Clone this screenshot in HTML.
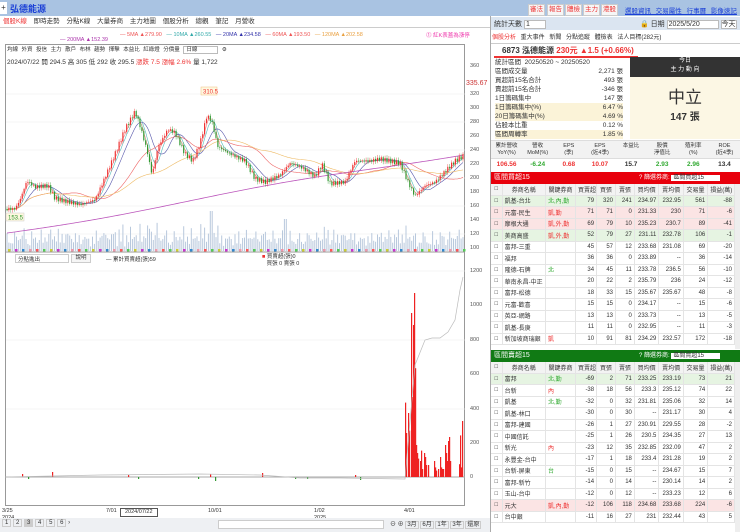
<!DOCTYPE html>
<html><head><meta charset="utf-8">
<style>
*{box-sizing:border-box;margin:0;padding:0}
body{width:740px;height:532px;overflow:hidden;background:#fff;font-family:"Liberation Sans","Noto Sans CJK TC",sans-serif;font-size:7px;color:#333;position:relative}
.a{position:absolute}
.btn{position:absolute;border:1px solid #ccc;background:#f6f6f6;font-size:6.5px;line-height:10px;text-align:center}
table{border-collapse:collapse;width:100%;font-size:6px;table-layout:fixed}
td{border-right:1px solid #e4e4e4;border-bottom:1px solid #e4e4e4;height:11.5px;text-align:right;padding:0 2px;white-space:nowrap;overflow:hidden}
td:first-child{text-align:center}
td.n{text-align:left}
tr.h td{background:#f3f3f3;text-align:center;height:11px}
.r{color:#e33}.g{color:#3a3}
</style></head><body>
<div class="a" style="left:0;top:0;width:740px;height:16px;background:#a9c3e2"></div>
<div class="a" style="left:0;top:2px;width:7px;height:12px;background:#fff;font-size:8px;line-height:12px;text-align:center">+</div>
<div class="a" style="left:10px;top:2px;font-size:9px;color:#1a3fd6;font-weight:bold">弘德能源</div>
<div class="btn" style="left:528px;top:4px;width:17px;color:#e33">審法</div>
<div class="btn" style="left:547px;top:4px;width:17px;color:#e33">報告</div>
<div class="btn" style="left:565px;top:4px;width:17px;color:#e33">體檢</div>
<div class="btn" style="left:583px;top:4px;width:17px;color:#e33">主力</div>
<div class="btn" style="left:601px;top:4px;width:17px;color:#e33">港股</div>
<div class="a" style="left:625px;top:5px;color:#1a3fd6;text-decoration:underline;font-size:6.5px;word-spacing:3px">選股資訊 交易屬性 行事曆 影像速記</div>
<div class="a" style="left:0;top:16px;width:490px;height:12px;border-bottom:1px solid #ccc"></div>
<div class="a" style="left:3px;top:17px;font-size:6.5px;line-height:10px;word-spacing:5px"><span class="r">個股K線</span> 即時走勢 分點K線 大量券商 主力地圖 個股分析 總觀 筆記 月營收</div>
<div class="a" style="left:120px;top:32px;font-size:5.5px;white-space:nowrap"><span style="color:#e55">— 5MA ▲279.90</span> &nbsp; <span style="color:#3aa">— 10MA ▲260.55</span> &nbsp; <span style="color:#33a">— 20MA ▲234.58</span> &nbsp; <span style="color:#e55">— 60MA ▲193.50</span> &nbsp; <span style="color:#e9a040">— 120MA ▲202.58</span></div>
<div class="a" style="left:60px;top:37px;font-size:5.5px;color:#a3a">— 200MA ▲152.39</div>
<div class="a" style="left:426px;top:31px;font-size:5.5px;color:#e3a">⓵ 紅K表蓋為漲停</div>
<div class="a" style="left:5px;top:44px;width:460px;height:462px;border:1px solid #999"></div>
<div class="a" style="left:7px;top:46px;font-size:5.5px;line-height:8px;word-spacing:2px;white-space:nowrap">均線 外資 投信 主力 散戶 布林 趨勢 揮擊 本益比 紅綠燈 分價量 <span style="border:1px solid #bbb;padding:0 20px 0 2px">日線</span> ⚙</div>
<div class="a" style="left:7px;top:56px;font-size:6.5px;white-space:nowrap">2024/07/22 開 294.5 高 305 低 292 收 295.5 <span class="r">漲跌 7.5 漲幅 2.6%</span> 量 1,722</div>
<div class="a" style="left:470px;top:0;font-size:5.5px;line-height:7px;color:#555">
<div class="a" style="top:63px">360</div><div class="a" style="top:91px">320</div><div class="a" style="top:105px">300</div><div class="a" style="top:119px">280</div><div class="a" style="top:133px">260</div><div class="a" style="top:147px">240</div><div class="a" style="top:161px">220</div><div class="a" style="top:175px">200</div><div class="a" style="top:189px">180</div><div class="a" style="top:203px">160</div><div class="a" style="top:217px">140</div><div class="a" style="top:231px">120</div><div class="a" style="top:245px">100</div>
<div class="a" style="top:268px">1200</div><div class="a" style="top:302px">1000</div><div class="a" style="top:337px">800</div><div class="a" style="top:371px">600</div><div class="a" style="top:406px">400</div><div class="a" style="top:440px">200</div><div class="a" style="top:474px">0</div>
</div>
<div class="a" style="left:466px;top:80px;font-size:7px;color:#c33">335.67</div>
<svg class="a" style="left:0;top:0" width="466" height="510" id="sv">
<g stroke="#eee" stroke-width="0.6"><line x1="6" x2="465" y1="94" y2="94"/><line x1="6" x2="465" y1="122" y2="122"/><line x1="6" x2="465" y1="150" y2="150"/><line x1="6" x2="465" y1="178" y2="178"/><line x1="6" x2="465" y1="206" y2="206"/><line x1="6" x2="465" y1="234" y2="234"/><line x1="6" x2="465" y1="271" y2="271"/><line x1="6" x2="465" y1="340" y2="340"/><line x1="6" x2="465" y1="409" y2="409"/></g>
<line x1="5" x2="465" y1="252" y2="252" stroke="#999"/>
<line x1="5" x2="465" y1="477" y2="477" stroke="#aaa"/>
<g id="vol"></g><g id="ma"></g><g id="ck"></g>
<rect x="201" y="87" width="16" height="8" fill="#fff8e0" stroke="#f0c080" stroke-width=".5"/><text x="203" y="93.5" font-size="6" fill="#e33">310.5</text>
<rect x="6" y="213" width="18" height="8" fill="#fff8e0" stroke="#ccc" stroke-width=".5"/><text x="8" y="219.5" font-size="6" fill="#393">153.5</text>
<g id="lo"></g>
</svg>
<div class="a" style="left:15px;top:254px;width:54px;height:9px;border:1px solid #ccc;font-size:5.5px;padding-left:2px">分點進出</div>
<div class="btn" style="left:71px;top:254px;width:20px;height:9px;line-height:7px;font-size:5.5px">說明</div>
<div class="a" style="left:106px;top:255px;font-size:5.5px">— 累計買賣超(張)59</div>
<div class="a" style="left:262px;top:254px;font-size:5.5px;line-height:7px"><span class="r">■</span> 買賣超(張)0<br>&nbsp;&nbsp; 買張 0 賣張 0</div>
<div class="a" style="left:2px;top:508px;font-size:5.5px;line-height:7px;width:470px">
<span class="a" style="left:0">3/25<br>2024</span><span class="a" style="left:104px">7/01</span><span class="a" style="left:118px;border:1px solid #555;padding:0 4px">2024/07/22</span><span class="a" style="left:206px">10/01</span><span class="a" style="left:312px">1/02<br>2025</span><span class="a" style="left:402px">4/01</span></div>
<div class="a" style="left:0;top:518px;width:490px;height:14px;background:#eef0f3"></div>
<div class="a" style="left:2px;top:520px;font-size:6px;white-space:nowrap"><span style="border:1px solid #ccc;padding:0 2px">1</span> <span style="border:1px solid #ccc;padding:0 2px">2</span> <span style="border:1px solid #ccc;padding:0 2px;background:#ccc">3</span> <span style="border:1px solid #ccc;padding:0 2px">4</span> <span style="border:1px solid #ccc;padding:0 2px">5</span> <span style="border:1px solid #ccc;padding:0 2px">6</span> ›</div>
<div class="a" style="left:218px;top:520px;width:166px;height:9px;border:1px solid #ccc;background:#fff"></div>
<div class="a" style="left:390px;top:519px;font-size:6px;white-space:nowrap">⊖ ⊕ <span style="border:1px solid #ccc;padding:0 1px">3月</span> <span style="border:1px solid #ccc;padding:0 1px">6月</span> <span style="border:1px solid #ccc;padding:0 1px">1年</span> <span style="border:1px solid #ccc;padding:0 1px">3年</span> <span style="border:1px solid #ccc;padding:0 1px">還原</span></div>
<div class="a" style="left:490px;top:16px;width:1px;height:516px;background:#aaa"></div>
<div class="a" style="left:491px;top:17px;width:249px;height:13px;background:#dbe5f1"></div>
<div class="a" style="left:494px;top:19px;font-size:7px">統計天數 <span style="display:inline-block;width:22px;border:1px solid #bbb;background:#fff;padding-left:1px">1</span></div>
<div class="a" style="left:640px;top:19px;font-size:7px;white-space:nowrap">🔒 日期 <span style="display:inline-block;width:52px;border:1px solid #bbb;background:#fff;padding-left:1px">2025/5/20</span> <span style="border:1px solid #bbb;background:#fff">今天</span></div>
<div class="a" style="left:492px;top:32px;font-size:6px;word-spacing:3px;white-space:nowrap"><span class="r">個股分析</span> 重大事件 新聞 分點追蹤 體檢表 法人目標(282元)</div>
<div class="a" style="left:491px;top:43px;width:249px;height:1px;background:#ccc"></div>
<div class="a" style="left:502px;top:45px;font-size:8px;font-weight:bold;white-space:nowrap">6873 泓德能源 <span class="r">230元 ▲1.5 (+0.66%)</span></div>
<div class="a" style="left:494px;top:56px;width:144px;height:2px;background:#e33"></div>
<div class="a" style="left:630px;top:57px;width:110px;height:20px;background:#333;color:#fff;text-align:center;font-size:6px;line-height:9px">今日<br>主 力 動 向</div>
<div class="a" style="left:630px;top:77px;width:110px;height:62px;background:#fcf7e4;text-align:center"><div style="font-size:17px;margin-top:6px;color:#333">中立</div><div style="font-size:10px;font-weight:bold">147 張</div></div>
<div class="a" style="left:495px;top:58px;width:128px;font-size:6.5px;line-height:9px">
<div>統計區間 &nbsp;20250520 ~ 20250520</div>
<div>區間成交量<span style="float:right">2,271 張</span></div>
<div>買超前15名合計<span style="float:right">493 張</span></div>
<div>賣超前15名合計<span style="float:right">-346 張</span></div>
<div>1日籌碼集中<span style="float:right">147 張</span></div>
<div style="background:#fbf3d8">1日籌碼集中(%)<span style="float:right">6.47 %</span></div>
<div style="background:#fbf3d8">20日籌碼集中(%)<span style="float:right">4.69 %</span></div>
<div>佔股本比重<span style="float:right">0.12 %</span></div>
<div style="background:#fbf3d8">區間周轉率<span style="float:right">1.85 %</span></div>
</div>
<div class="a" style="left:491px;top:140px;width:249px;height:32px;font-size:5.5px;text-align:center">
<div style="display:flex;height:19px;background:#f2f2f2;border-top:1px solid #ddd;border-bottom:1px solid #ddd;line-height:7px;padding-top:2px"><div style="flex:1">累計營收<br>YoY(%)</div><div style="flex:1">營收<br>MoM(%)</div><div style="flex:1">EPS<br>(季)</div><div style="flex:1">EPS<br>(近4季)</div><div style="flex:1">本益比</div><div style="flex:1">股價<br>淨值比</div><div style="flex:1">殖利率<br>(%)</div><div style="flex:1">ROE<br>(近4季)</div></div>
<div style="display:flex;font-size:6.5px;font-weight:bold;line-height:12px"><div style="flex:1" class="r">106.56</div><div style="flex:1" class="g">-6.24</div><div style="flex:1" class="r">0.68</div><div style="flex:1" class="r">10.07</div><div style="flex:1">15.7</div><div style="flex:1" class="g">2.93</div><div style="flex:1" class="g">2.96</div><div style="flex:1">13.4</div></div></div>
<div class="a" style="left:491px;top:172px;width:249px;height:12px;background:#e8000c;color:#fff;font-size:7px;line-height:12px;padding-left:3px">區間買超15<span style="position:absolute;left:148px;font-size:6px">? 篩選券商: <span style="background:#fff;color:#333;padding:0 16px 0 2px">區間買超15</span></span></div>
<div class="a" style="left:491px;top:184px;width:244px"><table id="t1"></table></div>
<div class="a" style="left:491px;top:350px;width:249px;height:12px;background:#107a14;color:#fff;font-size:7px;line-height:12px;padding-left:3px">區間賣超15<span style="position:absolute;left:148px;font-size:6px">? 篩選券商: <span style="background:#fff;color:#333;padding:0 16px 0 2px">區間賣超15</span></span></div>
<div class="a" style="left:491px;top:362px;width:244px"><table id="t2"></table></div>
<div class="a" style="left:735px;top:184px;width:5px;height:165px;background:#eee"></div>
<div class="a" style="left:735px;top:362px;width:5px;height:170px;background:#eee"></div>
<script>
var W=[10,39,27,19,17,17,22,22,22,24];
var H='<colgroup>'+W.map(function(w){return '<col style="width:'+w+'px">'}).join('')+'</colgroup><tr class="h"><td>□</td><td>券商名稱</td><td>關鍵券商</td><td>買賣超</td><td>買張</td><td>賣張</td><td>買均價</td><td>賣均價</td><td>交易量</td><td>損益(萬)</td></tr>';
function T(id,rows){var s=H;rows.forEach(function(r){var bg=r[9]?'background:'+r[9]:'';s+='<tr style="'+bg+'"><td>□</td><td class="n">'+r[0]+'</td><td class="n" style="color:'+(r[1][0]=='北'||r[1][0]=='台'?'#3a3':'#e33')+'">'+r[1]+'</td>';for(var i=2;i<9;i++)s+='<td>'+r[i]+'</td>';s+='</tr>'});document.getElementById(id).innerHTML=s}
var P='#e6f4e2',R='#fbe4e4';
T('t1',[["凱基-台北","北,內,勤",79,320,241,234.97,232.95,561,-88,P],["元富-民生","凱,勤",71,71,0,231.33,230,71,-6,R],["摩根大通","凱,外,勤",69,79,10,235.23,230.7,89,-41,R],["美商高盛","凱,外,勤",52,79,27,231.11,232.78,106,-1,P],["富邦-三重","",45,57,12,233.68,231.08,69,-20],["福邦","",36,36,0,233.89,"--",36,-14],["隆德-石牌","北",34,45,11,233.78,236.5,56,-10],["華南永昌-中正","",20,22,2,235.79,236,24,-12],["富邦-松德","",18,33,15,235.67,235.67,48,-8],["元富-歡喜","",15,15,0,234.17,"--",15,-6],["英亞-網路","",13,13,0,233.73,"--",13,-5],["凱基-長庚","",11,11,0,232.95,"--",11,-3],["新加坡商瑞銀","凱",10,91,81,234.29,232.57,172,-18]]);
T('t2',[["富邦","北,勤",-69,2,71,233.25,233.19,73,21,P],["台新","內",-38,18,56,233.3,235.12,74,22],["凱基","北,勤",-32,0,32,231.81,235.06,32,14],["凱基-林口","",-30,0,30,"--",231.17,30,4],["富邦-建國","",-26,1,27,230.91,229.55,28,-2],["中國信託","",-25,1,26,230.5,234.35,27,13],["新光","內",-23,12,35,232.85,232.09,47,2],["永豐金-台中","",-17,1,18,233.4,231.28,19,2],["台新-屏東","台",-15,0,15,"--",234.67,15,7],["富邦-新竹","",-14,0,14,"--",230.14,14,2],["玉山-台中","",-12,0,12,"--",233.23,12,6],["元大","凱,內,勤",-12,106,118,234.68,233.68,224,-6,R],["台中銀","",-11,16,27,231,232.44,43,5]]);
var K=[[6,157],[15,157],[20,170],[27,197],[35,188],[48,190],[55,172],[65,168],[80,163],[95,170],[103,195],[115,235],[125,270],[135,295],[140,275],[147,240],[152,205],[158,245],[168,270],[175,265],[185,235],[193,225],[200,250],[207,290],[212,280],[218,245],[230,235],[245,225],[255,200],[265,195],[280,205],[290,222],[300,217],[315,203],[322,220],[330,193],[345,195],[355,225],[370,225],[380,228],[400,222],[408,195],[415,175],[425,190],[435,195],[445,210],[455,225],[463,232]];
function pr(x){for(var i=1;i<K.length;i++)if(x<=K[i][0]){var a=K[i-1],b=K[i];return a[1]+(b[1]-a[1])*(x-a[0])/(b[0]-a[0])}return 232}
function Y(p){return 94+(320-p)*0.705}
var ck='',vol='',prev=157,cl=[];
for(var x=7;x<=464;x+=1.9){var c=pr(x)+Math.sin(x*1.7)*3;var o=prev;var up=c>=o;var hi=Math.max(o,c)+1.5+Math.abs(Math.sin(x*3))*2.5,lo=Math.min(o,c)-1.5-Math.abs(Math.cos(x*2))*2.5;var col=up?'#e33':'#393';ck+='<line x1="'+x+'" x2="'+x+'" y1="'+Y(hi)+'" y2="'+Y(lo)+'" stroke="'+col+'" stroke-width=".4"/><rect x="'+(x-0.6)+'" y="'+Y(Math.max(o,c))+'" width="1.2" height="'+Math.max(0.6,Math.abs(Y(o)-Y(c)))+'" fill="'+col+'"/>';var v=4+Math.abs(Math.sin(x*0.73)*Math.cos(x*1.3))*14+Math.abs(c-o)*0.8;if(Math.abs(x-211)<2)v=40;if(Math.abs(x-285)<2)v=32;vol+='<rect x="'+(x-0.5)+'" y="'+(251-v)+'" width="1" height="'+v+'" fill="#b8c8dc"/>';cl.push([x,c]);prev=c;}
function ma(n,col){var s='';for(var i=0;i<cl.length;i++){var a=0,k=0;for(var j=Math.max(0,i-n+1);j<=i;j++){a+=cl[j][1];k++}s+=cl[i][0]+','+Y(a/k)+' '}return '<polyline points="'+s+'" fill="none" stroke="'+col+'" stroke-width=".6"/>'}
var m=ma(3,'#e88')+ma(5,'#5bb')+ma(10,'#55a')+ma(30,'#e66')+ma(60,'#eb6');
var s2='';for(var i=0;i<cl.length;i++){var x=cl[i][0];s2+=x+','+(233-(x-6)/458*80+Math.sin(x/60)*2)+' '}m+='<polyline points="'+s2+'" fill="none" stroke="#b5b" stroke-width=".8"/>';
var mk='';for(var x=8;x<464;x+=7){var cs=['#f55','#5c5','#cc3','#c3c','#38c','#e9a'];mk+='<rect x="'+x+'" y="249" width="2.5" height="2.5" fill="'+cs[Math.floor(x*7)%6]+'"/>'}
var lo='';var B=[[405,93],[406,55],[408,80],[409,58],[411,205],[412,100],[413,190],[414,230],[415,136],[416,40],[417,30],[418,23],[420,20],[421,33],[422,10],[424,30],[425,25],[426,15],[428,15],[434,20],[435,12],[436,8],[438,10],[440,25],[441,12],[442,10],[443,10],[445,40],[446,30],[447,20],[448,45],[449,50],[450,20],[459,16],[460,52],[461,12],[462,70]];
B.forEach(function(b){lo+='<rect x="'+b[0]+'" y="'+(477-b[1]*0.8)+'" width="1.2" height="'+(b[1]*0.8)+'" fill="#e22"/>'});
[[22,3],[52,5],[128,2],[210,3],[262,4],[355,2]].forEach(function(b){lo+='<rect x="'+b[0]+'" y="'+(477-b[1])+'" width="1.2" height="'+b[1]+'" fill="#e22"/>'});
[[28,2],[138,2],[198,2],[215,4],[295,2],[307,2],[360,3]].forEach(function(b){lo+='<rect x="'+b[0]+'" y="477" width="1.2" height="'+b[1]+'" fill="#393"/>'});
lo+='<polyline points="6,477 100,475 200,474 260,475 300,478 340,478 405,479 415,365 425,340 432,338 440,338 448,332 455,320 460,290 463,277" fill="none" stroke="#bbb" stroke-width=".7"/>';
document.getElementById('ck').innerHTML=ck;document.getElementById('vol').innerHTML=vol+mk;document.getElementById('ma').innerHTML=m;document.getElementById('lo').innerHTML=lo;
</script>
</body></html>
